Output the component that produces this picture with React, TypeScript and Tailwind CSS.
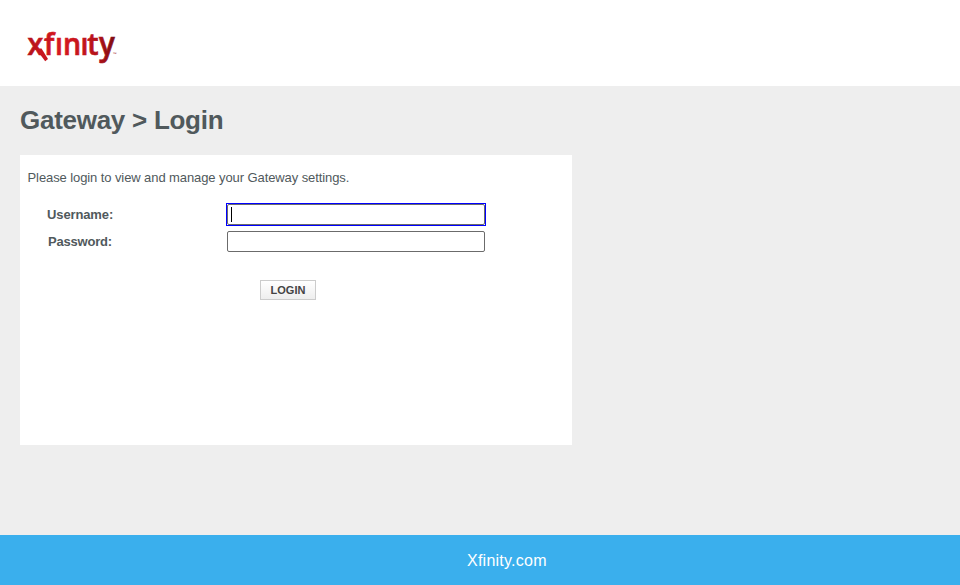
function Logo() {
  return (
    <svg width="92" height="34" viewBox="0 0 92 34" aria-label="xfinity" className="block overflow-visible">
      <defs>
        <linearGradient id="brand" gradientUnits="userSpaceOnUse" x1="0" y1="0" x2="100" y2="0">
          <stop offset="0" stopColor="#b5121b" />
          <stop offset="0.35" stopColor="#d8181f" />
          <stop offset="0.75" stopColor="#b51219" />
          <stop offset="1" stopColor="#6d0a10" />
        </linearGradient>
      </defs>
      <text
        transform="scale(0.92 1)"
        x="-0.6 17.4 29.3 38 57 64.4 77.2"
        y="25"
        fill="url(#brand)"
        stroke="url(#brand)"
        strokeWidth="0.7"
        fontFamily="'Open Sans', sans-serif"
        fontWeight="600"
        fontSize="31"
      >
        xfınıt<tspan fontSize="32">y</tspan>
      </text>
      <path d="M10.3 18.4 L13.5 18.4 L20 29 L17.2 31.2 L8.8 20 Z" fill="#c8161e" />
      <text x="84.5" y="24.5" fill="#a02026" fontFamily="'Liberation Sans', sans-serif" fontSize="4">
        ™
      </text>
    </svg>
  );
}

export default function App() {
  return (
    <div className="flex h-[585px] w-full flex-col bg-[#eeeeee] font-['Liberation_Sans',Arial,sans-serif] text-[#50595c]">
      <header className="h-[86px] shrink-0 bg-white pl-7 pt-[30px]">
        <Logo />
      </header>
      <main className="flex-1 px-5 pt-[15px]">
        <h1 className="h-[54px] text-[26px] font-bold leading-[38px] tracking-[-0.27px]">Gateway &gt; Login</h1>
        <section className="h-[290px] w-[552px] bg-white pt-[15px]">
          <p className="pl-[7.5px] text-[13px] leading-4 tracking-[-0.09px]">Please login to view and manage your Gateway settings.</p>
          <form className="flex flex-col gap-1.5 pt-[18px]">
            <div className="flex h-[21px] items-center">
              <label className="w-[207px] pl-[27px] text-[13px] font-bold tracking-[-0.12px]">Username:</label>
              <div className="outline outline-1 outline-[#0000ff]">
                <div className="flex h-[21px] w-[258px] items-center rounded-[2px] border border-[#6b6b6b] bg-white pl-[3px]">
                  <span className="h-[15px] w-px bg-black" />
                </div>
              </div>
            </div>
            <div className="flex h-[21px] items-center">
              <label className="w-[207px] pl-7 text-[13px] font-bold tracking-[-0.2px]">Password:</label>
              <div className="h-[21px] w-[258px] rounded-[2px] border border-[#6b6b6b] bg-white" />
            </div>
            <button
              type="button"
              className="ml-[240px] mt-[22px] h-5 w-14 border border-[#cccccc] bg-linear-to-b from-white to-[#eeeeee] text-[11px] font-bold leading-[18px] text-[#444444]"
            >
              LOGIN
            </button>
          </form>
        </section>
      </main>
      <footer className="flex h-[50px] shrink-0 items-center bg-[#3aafed] pl-[467px] pt-0.5 text-base tracking-[0.24px] text-white">
        Xfinity.com
      </footer>
    </div>
  );
}
